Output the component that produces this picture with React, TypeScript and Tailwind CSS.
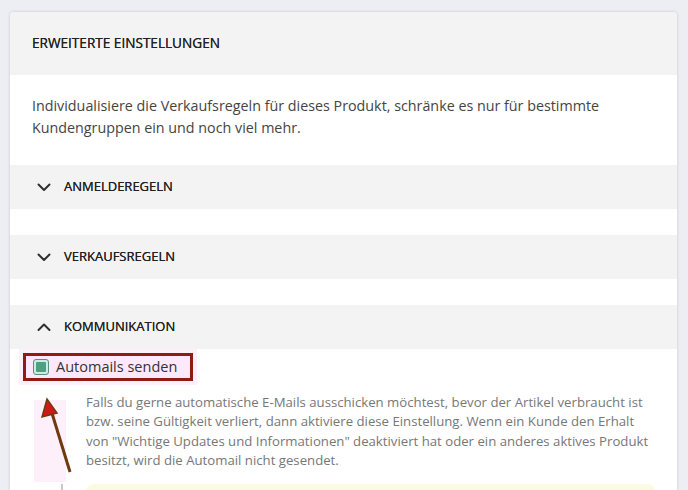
import React from "react";

const Chevron = ({ up }: { up?: boolean }) => (
  <svg width="14" height="14" viewBox="0 0 14 14" className="mr-[13px] shrink-0">
    <path
      d={up ? "M1.5 10 L7 4.5 L12.5 10" : "M1.5 4.5 L7 10 L12.5 4.5"}
      fill="none"
      stroke="#2f2f2f"
      strokeWidth="2"
      strokeLinecap="round"
      strokeLinejoin="round"
    />
  </svg>
);

const Section = ({ title, open }: { title: string; open?: boolean }) => (
  <div className="flex h-[44px] items-center bg-[#f3f3f3] pl-[27px] text-[13px] text-[#222] [text-shadow:0_0_0.4px_#222]">
    <Chevron up={open} />
    {title}
  </div>
);

export default function App() {
  return (
    <div
      className="h-[490px] overflow-hidden bg-[#eceef3] pl-[10px] pr-[11px] pt-[12px]"
      style={{ fontFamily: "'Open Sans', 'Noto Sans', sans-serif" }}
    >
      <div className="relative rounded-[4px] bg-white shadow-[0_0_3px_rgba(0,0,0,0.18)]">
        {/* header */}
        <div className="flex h-[63px] items-center rounded-t-[4px] bg-[#f3f3f3] pl-[22px] text-[13.6px] text-[#222] [text-shadow:0_0_0.4px_#222]">
          ERWEITERTE EINSTELLUNGEN
        </div>

        <p className="px-[22px] pb-[26px] pt-[20px] text-[14.3px] leading-[22px] text-[#444]">
          Individualisiere die Verkaufsregeln für dieses Produkt, schränke es nur für bestimmte
          <br />
          Kundengruppen ein und noch viel mehr.
        </p>

        <div className="flex flex-col gap-[26px]">
          <Section title="ANMELDEREGELN" />
          <Section title="VERKAUFSREGELN" />
          <Section title="KOMMUNIKATION" open />
        </div>

        {/* Kommunikation content */}
        <div className="pl-[13px] pt-[4px]">
          <div className="inline-flex bg-[#fde9fb] shadow-[0_0_0_4px_#fdf0fb]">
            <div className="flex h-[28px] w-[170px] items-center border-[3px] border-[#8e1c12] pl-[7px]">
              <span className="mr-[7px] flex h-[16px] w-[16px] items-center justify-center rounded-[3px] border-[1.5px] border-[#5a8f7b] bg-[#c8ede3]">
                <span className="h-[10px] w-[10px] rounded-[1px] bg-[#4f9f83]" />
              </span>
              <span className="text-[14.5px] text-[#333]">Automails senden</span>
            </div>
          </div>

          <p className="ml-[63px] mt-[12px] whitespace-nowrap text-[13.2px] leading-[19.4px] text-[#777]">
            Falls du gerne automatische E-Mails ausschicken möchtest, bevor der Artikel verbraucht ist
            <br />
            bzw. seine Gültigkeit verliert, dann aktiviere diese Einstellung. Wenn ein Kunde den Erhalt
            <br />
            von "Wichtige Updates und Informationen" deaktiviert hat oder ein anderes aktives Produkt
            <br />
            besitzt, wird die Automail nicht gesendet.
          </p>

          <div className="mt-[13px] flex">
            <div className="ml-[38px] h-[40px] w-[2px] bg-[#c8c8c8]" />
            <div className="ml-[23px] mr-[22px] h-[40px] flex-1 rounded-[8px] bg-[#fcfae0]" />
          </div>
        </div>

        {/* annotation arrow */}
        <svg className="pointer-events-none absolute left-[-10px] top-[-12px]" width="120" height="490" viewBox="0 0 120 490">
          <rect x="34" y="400" width="32" height="82" fill="#fbe3f7" opacity="0.55" />
          <line x1="70" y1="472" x2="51" y2="410" stroke="#6e3a0e" strokeWidth="3" />
          <polygon points="47,399 42,417 57,413" fill="#d01818" stroke="#6e3a0e" strokeWidth="1.5" />
        </svg>
      </div>
    </div>
  );
}
